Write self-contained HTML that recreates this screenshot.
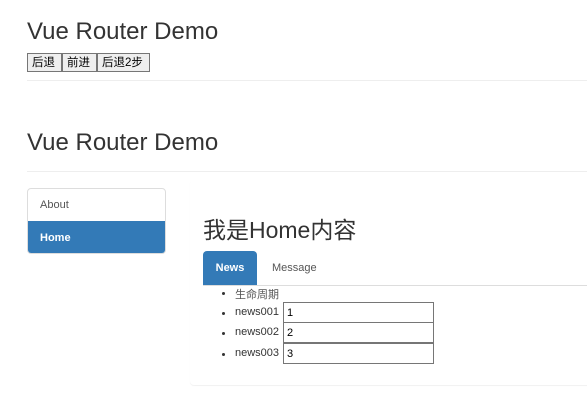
<!DOCTYPE html>
<html><head><meta charset="utf-8"><style>
body{margin:0;background:#fff;font-family:"Liberation Sans","Noto Sans CJK SC",sans-serif;color:#333;font-size:11px;position:relative;width:587px;height:420px;overflow:hidden}
.a{position:absolute}
h1{margin:0;font-weight:normal;font-size:24px;position:absolute;left:27px;white-space:nowrap}
.btn{position:absolute;top:53px;height:19px;border:1px solid #767676;background:#efefef;box-sizing:border-box;font-size:11.5px;line-height:18px;padding:0 4px;color:#000}
.hr{position:absolute;left:27px;right:0;height:1px;background:#eee}
li{position:absolute;left:235px;font-size:11px;white-space:nowrap}
li:before{content:"";position:absolute;left:-13px;top:6px;width:3px;height:3px;border-radius:50%;background:#333}
.in{position:absolute;left:283px;width:151px;height:21px;border:1px solid #767676;box-sizing:border-box;font-size:11px;padding:4px 0 0 3px;color:#000}
</style></head><body>
<h1 style="top:18px">Vue Router Demo</h1>
<div class="btn" style="left:27px;width:35px">后退</div>
<div class="btn" style="left:62px;width:35px">前进</div>
<div class="btn" style="left:97px;width:53px">后退2步</div>
<div class="hr" style="top:80px"></div>
<h1 style="top:129px">Vue Router Demo</h1>
<div class="hr" style="top:171px"></div>
<div class="a" style="left:27px;top:188px;width:139px;height:66px;border:1px solid #ddd;border-radius:4px;box-sizing:border-box;overflow:hidden">
<div style="height:32px;line-height:33px;padding-left:12px;color:#555">About</div>
<div style="height:34px;line-height:35px;padding-left:12px;background:#337ab7;color:#fff;font-weight:bold">Home</div></div>
<div class="a" style="left:190px;top:180px;width:420px;height:205px;border-radius:4px;box-shadow:0 1px 1px rgba(0,0,0,.06)"></div>
<div class="a" style="left:203px;top:211px;font-size:23px;white-space:nowrap">我是Home内容</div>
<div class="a" style="left:203px;top:251px;width:54px;height:34px;background:#337ab7;border-radius:4px 4px 0 0;color:#fff;font-weight:bold;text-align:center;line-height:35px">News</div>
<div class="a" style="left:272px;top:251px;height:34px;line-height:35px;color:#555">Message</div>
<div class="a" style="left:203px;right:0;top:285px;height:1px;background:#ddd"></div>
<ul style="margin:0;padding:0;list-style:none">
<li style="top:286px;color:#555">生命周期</li>
<li style="top:306px">news001</li>
<li style="top:326px">news002</li>
<li style="top:347px">news003</li></ul>
<div class="in" style="top:302px">1</div>
<div class="in" style="top:322px">2</div>
<div class="in" style="top:343px">3</div>
</body></html>
